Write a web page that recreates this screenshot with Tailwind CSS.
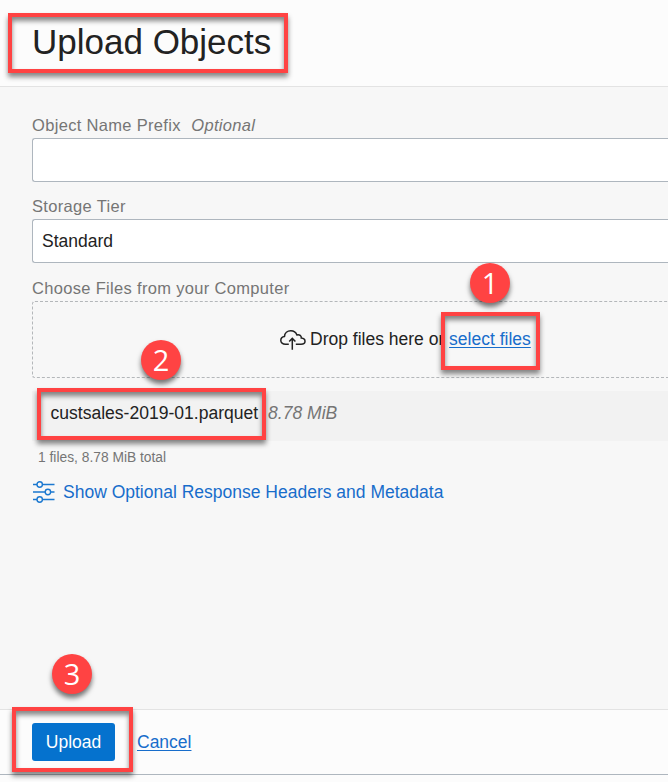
<!DOCTYPE html>
<html lang="en">
<head>
<meta charset="utf-8">
<title>Upload Objects</title>
<script src="https://cdn.jsdelivr.net/npm/@tailwindcss/browser@4"></script>
</head>
<body class="relative w-[668px] h-[782px] overflow-hidden bg-[#fcfcfc] font-['Liberation_Sans',Arial,sans-serif] text-[#222]">
<div class="flex h-full flex-col">
  <header class="h-[87px] shrink-0 border-b border-[#e3e3e3] pl-8 pt-[22px]">
    <h1 class="whitespace-nowrap text-[35px] leading-[40px]">Upload Objects</h1>
  </header>
  <main class="h-[622px] shrink-0 bg-[#f7f7f7] pl-8 pt-7">
    <div class="flex h-[23px] items-start gap-[10.5px] text-[16.5px] leading-[20px] tracking-[0.32px] text-[#757575]">
      <label>Object Name Prefix</label><em>Optional</em>
    </div>
    <div class="h-11 rounded-l-[3px] border border-r-0 border-[#aeb6be] bg-white"></div>
    <div class="mt-[14px] h-[23px] text-[16.5px] leading-[20px] tracking-[0.32px] text-[#757575]">Storage Tier</div>
    <div class="flex h-11 items-center rounded-l-[3px] border border-r-0 border-[#aeb6be] bg-white pl-[9px] text-[17.5px]">Standard</div>
    <div class="mt-[15px] h-[23px] text-[16.5px] leading-[20px] tracking-[0.32px] text-[#757575]">Choose Files from your Computer</div>
    <div class="flex h-[77px] items-center rounded-l-[3px] border border-r-0 border-dashed border-[#b4b7ba] pl-[247px] text-[17.5px]">
      <svg class="mr-1 mt-[1px] h-5 w-[26px] shrink-0" viewBox="0 0 26 20" fill="none" stroke="#222" stroke-width="1.5"><path d="M8.8 14.3H5.5C2.6 14.3 .8 12.6 .8 10.4C.8 8.1 2.3 6.6 4.5 6.4C4.7 3.1 7.3 .8 10.8 .8C13.8 .8 15.9 2.3 16.9 4.9C19.6 4.2 21.5 5.8 21.3 8.1C23.5 8.3 25 9.5 25 11.3C25 13.1 23.4 14.3 21 14.3H15.8M12.3 19.7V8.4M9.2 11.5L12.3 8.4L15.4 11.5"/></svg>
      <span class="whitespace-nowrap">Drop files here or <a class="text-[#176dcb] underline underline-offset-2">select files</a></span>
    </div>
    <div class="mt-[13px] flex h-[50px] items-center gap-[10px] bg-[#f2f2f2] pb-[6px] pl-[18.5px] text-[17.55px]">
      <span>custsales-2019-01.parquet</span><em class="text-[#757575]">8.78 MiB</em>
    </div>
    <div class="mt-[8px] h-[17px] pl-[6px] text-[13.8px] leading-[17px] text-[#757575]">1 files, 8.78 MiB total</div>
    <div class="mt-[14px] flex h-6 items-center text-[17.5px] text-[#176dcb]">
      <svg class="mr-2 h-[22px] w-[23px] shrink-0" viewBox="0 0 23 22" fill="none" stroke="#1b78d0" stroke-width="1.4"><path d="M1 3.5H5M10.4 3.5H22.5M1 11H13.2M18.6 11H22.5M1 18.5H5M10.4 18.5H22.5"/><circle cx="7.7" cy="3.5" r="2.7"/><circle cx="15.9" cy="11" r="2.7"/><circle cx="7.7" cy="18.5" r="2.7"/></svg>
      <span class="whitespace-nowrap">Show Optional Response Headers and Metadata</span>
    </div>
  </main>
  <footer class="flex h-[66px] shrink-0 items-start border-b border-t border-b-[#aeb6be] border-t-[#e3e3e3] pl-8 pt-[13px] text-[17.5px]">
    <button class="h-[38px] w-[83px] rounded-[3px] bg-[#0572ce] text-white">Upload</button>
    <a class="ml-[22px] leading-[38px] text-[#176dcb] underline underline-offset-2">Cancel</a>
  </footer>
</div>
<div class="absolute left-[8px] top-[13px] h-[60px] w-[280px] border-4 border-[#ff4343] shadow-[0_4px_5px_#0007,inset_0_4px_5px_#0007]"></div>
<div class="absolute left-[441px] top-[312px] h-[58px] w-[99px] border-4 border-[#ff4343] shadow-[0_4px_5px_#0007,inset_0_4px_5px_#0007]"></div>
<div class="absolute left-[37px] top-[388px] h-[52px] w-[229px] border-4 border-[#ff4343] shadow-[0_4px_5px_#0007,inset_0_4px_5px_#0007]"></div>
<div class="absolute left-[12px] top-[707px] h-[65px] w-[121px] border-4 border-[#ff4343] shadow-[0_4px_5px_#0007,inset_0_4px_5px_#0007]"></div>
<div class="absolute left-[470px] top-[263px] flex size-10 items-center justify-center rounded-full bg-[#ff4343] pb-0.5 font-['Open_Sans',sans-serif] text-[29px] leading-none text-white shadow-[0_4px_5px_#0008]">1</div>
<div class="absolute left-[141px] top-[340px] flex size-10 items-center justify-center rounded-full bg-[#ff4343] pb-0.5 font-['Open_Sans',sans-serif] text-[29px] leading-none text-white shadow-[0_4px_5px_#0008]">2</div>
<div class="absolute left-[52px] top-[654px] flex size-10 items-center justify-center rounded-full bg-[#ff4343] pb-0.5 font-['Open_Sans',sans-serif] text-[29px] leading-none text-white shadow-[0_4px_5px_#0008]">3</div>
</body>
</html>
